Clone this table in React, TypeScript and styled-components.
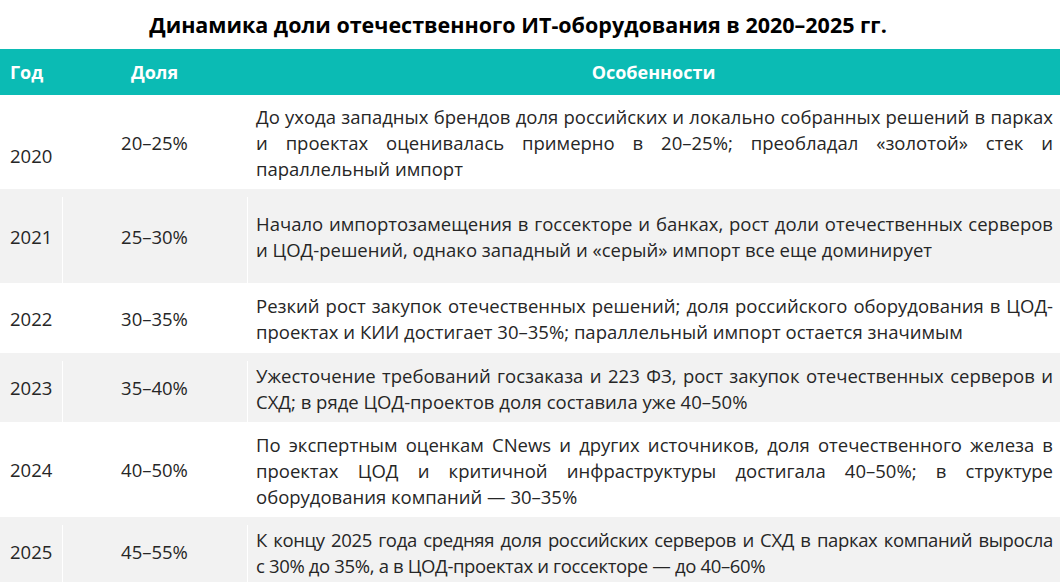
import styled, { createGlobalStyle } from "styled-components"

const GlobalStyle = createGlobalStyle`
  html, body {
    margin: 0;
    padding: 0;
    background: #fff;
  }
  body {
    font-family: "Open Sans", "Noto Sans", sans-serif;
    color: #262626;
  }
`

type RowData = {
  year: string;
  share: string;
  height: number;
  lines: string[];
  yearShift?: number;
  tight?: boolean;
}

const rows: RowData[] = [
  {
    year: "2020",
    share: "20–25%",
    height: 94,
    yearShift: 26,
    lines: [
      "До ухода западных брендов доля российских и локально собранных решений в парках",
      "и проектах оценивалась примерно в 20–25%; преобладал «золотой» стек и",
      "параллельный импорт",
    ],
  },
  {
    year: "2021",
    share: "25–30%",
    height: 94,
    lines: [
      "Начало импортозамещения в госсекторе и банках, рост доли отечественных серверов",
      "и ЦОД-решений, однако западный и «серый» импорт все еще доминирует",
    ],
  },
  {
    year: "2022",
    share: "30–35%",
    height: 70,
    lines: [
      "Резкий рост закупок отечественных решений; доля российского оборудования в ЦОД-",
      "проектах и КИИ достигает 30–35%; параллельный импорт остается значимым",
    ],
  },
  {
    year: "2023",
    share: "35–40%",
    height: 69,
    lines: [
      "Ужесточение требований госзаказа и 223 ФЗ, рост закупок отечественных серверов и",
      "СХД; в ряде ЦОД-проектов доля составила уже 40–50%",
    ],
  },
  {
    year: "2024",
    share: "40–50%",
    height: 95,
    lines: [
      "По экспертным оценкам CNews и других источников, доля отечественного железа в",
      "проектах ЦОД и критичной инфраструктуры достигала 40–50%; в структуре",
      "оборудования компаний — 30–35%",
    ],
  },
  {
    year: "2025",
    share: "45–55%",
    height: 69,
    tight: true,
    lines: [
      "К концу 2025 года средняя доля российских серверов и СХД в парках компаний выросла",
      "с 30% до 35%, а в ЦОД-проектах и госсекторе — до 40–60%",
    ],
  },
]

const App = () => {
  return (
    <Page>
      <GlobalStyle />
      <Title>Динамика доли отечественного ИТ-оборудования в 2020–2025 гг.</Title>
      <Table>
        <HeaderRow>
          <HeaderCell>Год</HeaderCell>
          <HeaderCell $center>Доля</HeaderCell>
          <HeaderCell $center>Особенности</HeaderCell>
        </HeaderRow>
        {rows.map((row, i) => (
          <Row key={row.year} $alt={i % 2 === 1} $h={row.height}>
            <YearCell $shift={row.yearShift || 0}>{row.year}</YearCell>
            <ShareCell $alt={i % 2 === 1}>{row.share}</ShareCell>
            <TextCell $alt={i % 2 === 1} $tight={!!row.tight}>
              {row.lines.map((line, j) => (
                <Line key={j} $last={j === row.lines.length - 1}>{line}</Line>
              ))}
            </TextCell>
          </Row>
        ))}
      </Table>
    </Page>
  )
}

const Page = styled.div`
  width: 1060px;
  height: 582px;
  overflow: hidden;
`

const Title = styled.h1`
  margin: 0;
  height: 49px;
  padding-right: 24px;
  display: flex;
  align-items: center;
  justify-content: center;
  font-size: 21.5px;
  font-weight: 700;
  color: #000;
`

const Table = styled.div`
  display: flex;
  flex-direction: column;
  width: 100%;
`

const HeaderRow = styled.div`
  display: grid;
  grid-template-columns: 62px 185px 1fr;
  height: 46px;
  background: #0bbbb4;
`

const HeaderCell = styled.div<{ $center?: boolean }>`
  display: flex;
  align-items: center;
  justify-content: ${p => (p.$center ? "center" : "flex-start")};
  padding-left: ${p => (p.$center ? "0" : "10px")};
  font-size: 18px;
  font-weight: 700;
  color: #fff;
`

const Row = styled.div<{ $alt: boolean; $h: number }>`
  display: grid;
  grid-template-columns: 62px 185px 1fr;
  height: ${p => p.$h}px;
  background: ${p => (p.$alt ? "#f2f2f2" : "#fff")};
`

const YearCell = styled.div<{ $shift: number }>`
  display: flex;
  align-items: center;
  padding-left: 10px;
  padding-top: ${p => p.$shift}px;
  font-size: 18.5px;
`

const divider = `
  background-image: linear-gradient(#fff, #fff);
  background-repeat: no-repeat;
  background-position: 0 8px;
  background-size: 1px 100%;
`

const ShareCell = styled.div<{ $alt: boolean }>`
  display: flex;
  align-items: center;
  justify-content: center;
  font-size: 18.5px;
  ${p => (p.$alt ? divider : "")}
`

const TextCell = styled.div<{ $alt: boolean; $tight: boolean }>`
  display: flex;
  flex-direction: column;
  justify-content: center;
  padding: 2px 7px 0 9px;
  font-size: 18.5px;
  line-height: 26px;
  letter-spacing: ${p => (p.$tight ? "-0.35px" : "normal")};
  ${p => (p.$alt ? divider : "")}
`

const Line = styled.span<{ $last: boolean }>`
  display: block;
  text-align: ${p => (p.$last ? "left" : "justify")};
  text-align-last: ${p => (p.$last ? "left" : "justify")};
`

export default App
